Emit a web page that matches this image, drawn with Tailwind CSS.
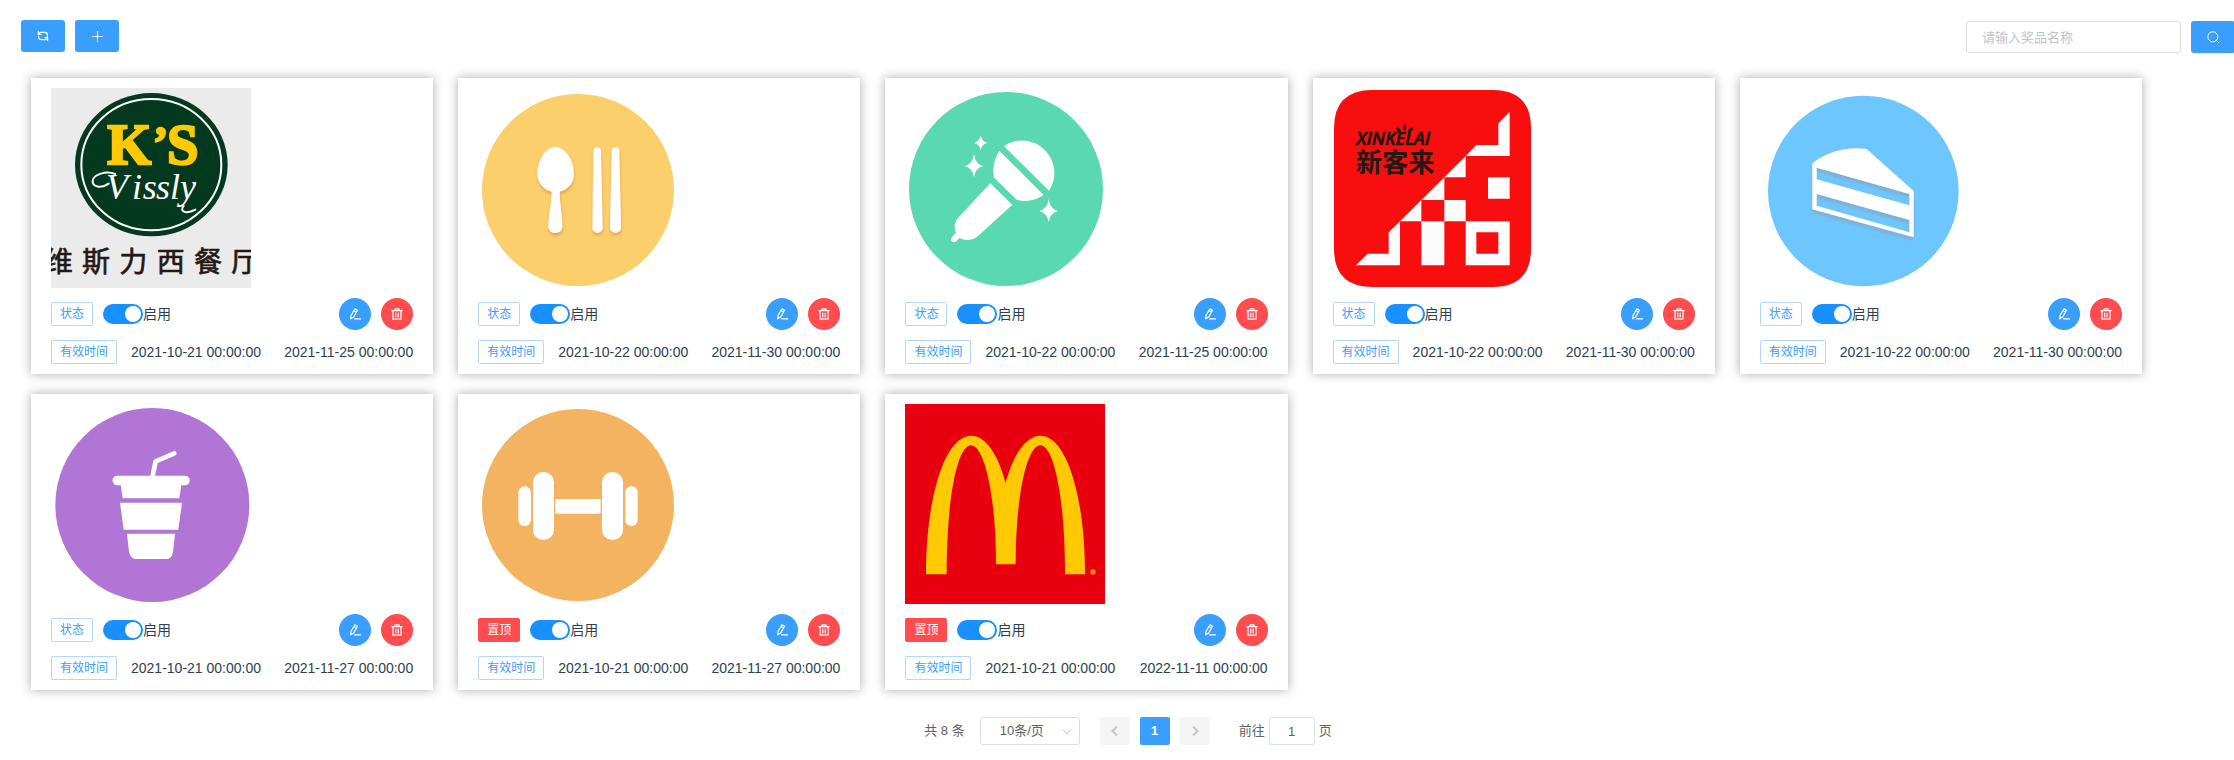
<!DOCTYPE html>
<html lang="zh-CN">
<head>
  <meta charset="UTF-8">
  <meta name="viewport" content="width=device-width, initial-scale=1.0">
  <title>奖品管理</title>
  <script src="https://cdn.jsdelivr.net/npm/@tailwindcss/browser@4"></script>
</head>
<body class="bg-white font-['Liberation_Sans','Noto_Sans_CJK_SC',sans-serif] text-sm text-[#2c3e50]">

  <!-- icons and prize pictures -->
  <svg class="absolute size-0" aria-hidden="true">
    <symbol id="i-refresh" viewBox="0 0 12 12">
      <g fill="none" stroke="currentColor" stroke-width="1.2" stroke-linecap="round" stroke-linejoin="round">
        <path d="M1.4 4.2 3.2 2.3h4.6a2.6 2.6 0 0 1 2.6 2.6v1.4M1.4 1.6v2.8h2.8"/>
        <path d="M10.6 7.8 8.8 9.7H4.2a2.6 2.6 0 0 1-2.6-2.6V6.2M10.6 10.4V7.6H7.8"/>
      </g>
    </symbol>
    <symbol id="i-plus" viewBox="0 0 12 12"><path d="M6.5 1v11M1 6.5h11" fill="none" stroke="currentColor"/></symbol>
    <symbol id="i-search" viewBox="0 0 12 12">
      <g fill="none" stroke="currentColor"><circle cx="5.8" cy="5.8" r="5"/><path d="m9.4 9.4 2.1 2.1" stroke-linecap="round"/></g>
    </symbol>
    <symbol id="i-edit" viewBox="0 0 12 12">
      <g fill="none" stroke="currentColor" stroke-width="1.2" stroke-linejoin="round"><path d="M5.9.8 8.5 2.3 4.7 8.9 1.7 10.8 2 7.5zM4.9 2.6l2.6 1.5"/><path d="M5.5 10.8h6" stroke-linecap="round"/></g>
    </symbol>
    <symbol id="i-delete" viewBox="0 0 12 12">
      <path d="M.8 2.6h10.4M4 2.6V.8h4v1.8M2 2.6v8.6h8V2.6M4.8 5v4M7.2 5v4" fill="none" stroke="currentColor" stroke-width="1.2" stroke-linecap="round" stroke-linejoin="round"/>
    </symbol>

    <filter id="warm-shadow"><feDropShadow dx="1" dy="8" stdDeviation="5" flood-color="#e9974f" flood-opacity=".8"/></filter>
    <filter id="cool-shadow"><feDropShadow dx="0" dy="11" stdDeviation="4" flood-color="#7fafcb" flood-opacity=".9"/></filter>

    <symbol id="p-vissly" viewBox="153 264 600 600">
      <path fill="#ebebeb" d="M153 264h600v600H153z"/>
      <ellipse cx="454" cy="494" rx="229" ry="215" fill="#02391f"/>
      <ellipse cx="454" cy="494" rx="210" ry="197" fill="none" stroke="#fff" stroke-width="6"/>
      <g fill="#ffc905" stroke="#ffc905" stroke-width="7" font-family="Liberation Serif, serif" font-weight="700" font-size="170">
        <text x="322" y="492">K</text><text x="501" y="492">S</text><text x="460" y="472" font-size="130">’</text>
      </g>
      <text y="598" x="318 396 428 468 510 540" fill="#fff" font-family="Liberation Serif, serif" font-style="italic" font-size="108">Vissly</text>
      <path d="M326 551c-22 16-50 10-48-9 3-19 40-31 68-20M551 618c-14 14 5 27 35 11" fill="none" stroke="#fff" stroke-width="6" stroke-linecap="round"/>
      <text y="816" x="134 246 358 470 582 694" fill="#231815" stroke="#231815" stroke-width="2" font-family="Noto Sans CJK SC, sans-serif" font-size="84">维斯力西餐厅</text>
    </symbol>

    <symbol id="p-meal" viewBox="84 84 600 600">
      <circle cx="384" cy="390" r="288" fill="#fbcf6c"/>
      <g fill="#fff" filter="url(#warm-shadow)">
        <path d="M316 261c32 0 56 42 56 80 0 28-17 46-43 54 0 36 8 70 8 102 0 14-8 22-21 22s-21-8-21-22c0-32 10-66 10-102-26-8-43-26-43-54 0-38 24-80 54-80z"/>
        <path d="M430 273c0-15 23-15 23 0l5 230c0 20-31 20-31 0zM485 273c0-15 23-15 23 0l5 230c0 20-33 20-33 0z"/>
      </g>
    </symbol>

    <symbol id="p-mic" viewBox="105 84 600 600">
      <circle cx="408" cy="387" r="291" fill="#5ad8b0"/>
      <g fill="#fff">
        <path d="M402 258A97 97 0 0 1 537 392zM388 272 521 405Q482 431 440 419L372 353Q364 310 388 272zM361 370l66 64-102 93q-26 22-57 7l-9 10q-8 7-15-2-4-8 14-23-10-24 4-43z"/>
        <path d="M332 226q3 18 19 23-16 4-19 22-3-18-19-22 16-5 19-23zM312 283q4 29 27 36-23 5-27 33-4-28-28-33 24-7 28-36zM536 417q4 30 28 36-24 6-28 34-4-28-28-34 24-6 28-36z"/>
      </g>
    </symbol>

    <symbol id="p-xinkelai" viewBox="99 84 600 600">
      <path fill="#f80e0e" d="M217 90h361q115 0 115 115v361q0 115-115 115H217q-115 0-115-115V205q0-115 115-115z"/>
      <path fill="#fcfcfc" fill-rule="evenodd" d="M629 155v133H497l32-33h66v-65zM497 288v64h-64zM433 352v68h-69zM364 420v64h-64zM433 420h64v64h-64zM300 484v132H168l35-35h63v-64zM364 484h69v132h-69zM497 484h132v132H497zm32 33v64h66v-64zM564 352h65v64h-65z"/>
      <text x="169" y="256" fill="#231815" stroke="#231815" stroke-width="2" font-family="Open Sans, sans-serif" font-weight="600" font-style="italic" font-size="54">XINKELAI</text>
      <path d="m293 207 5 5M314 199v8M334 207l-5 5" stroke="#231815" stroke-width="9" stroke-linecap="round"/>
      <text x="167" y="337" fill="#231815" font-family="Noto Sans CJK SC, sans-serif" font-weight="700" font-size="79">新客来</text>
    </symbol>

    <symbol id="p-cake" viewBox="120 264 600 600">
      <circle cx="430" cy="573" r="286" fill="#6ec6ff"/>
      <path fill="#fff" fill-rule="evenodd" filter="url(#cool-shadow)" d="M277 490c45-36 105-51 163-43l141 126v139l-304-84zM290 503v35l278 78v-34zM290 582v35l278 80v-37z"/>
    </symbol>

    <symbol id="p-drink" viewBox="153 72 600 600">
      <circle cx="457" cy="375" r="291" fill="#b175d5"/>
      <path fill="#fff" d="M352 287h203a14 14 0 0 1 0 29h-11l-6 39H368l-6-39h-10a14 14 0 0 1 0-29zM360 368h186l-11 81H371zM381 461h144l-6 54q-3 22-20 22h-92q-16-2-20-22z"/>
      <path d="m457 292 10-48 56-24" fill="none" stroke="#fff" stroke-width="14" stroke-linecap="round" stroke-linejoin="round"/>
    </symbol>

    <symbol id="p-gym" viewBox="84 72 600 600">
      <circle cx="384" cy="375" r="288" fill="#f3b361"/>
      <g fill="#fff">
        <rect x="205" y="319" width="38" height="119" rx="19"/><rect x="249" y="276" width="63" height="204" rx="31"/>
        <rect x="316" y="357" width="136" height="44" rx="4"/>
        <rect x="456" y="276" width="63" height="204" rx="31"/><rect x="526" y="319" width="37" height="119" rx="18"/>
      </g>
    </symbol>

    <symbol id="p-arches" viewBox="105 72 600 600">
      <path fill="#e8000f" d="M105 72h600v600H105z"/>
      <path fill="#ffc905" d="M168 583c0-233 57-416 136-416 41 0 79 52 103 142 24-90 63-142 104-142 79 0 134 183 134 416h-60c0-240-35-387-74-387s-74 147-74 357h-59c0-210-36-357-75-357s-73 147-73 387z"/>
      <circle cx="669" cy="576" r="8" fill="#f18a1d"/>
    </symbol>
  </svg>

  <header class="flex items-start justify-between overflow-hidden pt-5 pl-[21px]">
    <div class="flex gap-2.5">
      <button type="button" aria-label="刷新" class="flex h-8 w-11 items-center justify-center rounded-[3px] bg-[#3a9eff] text-white hover:bg-[#66b1ff]"><svg class="size-3"><use href="#i-refresh"/></svg></button>
      <button type="button" aria-label="新增" class="flex h-8 w-11 items-center justify-center rounded-[3px] bg-[#3a9eff] text-white hover:bg-[#66b1ff]"><svg class="size-3"><use href="#i-plus"/></svg></button>
    </div>
    <form class="-mr-px flex gap-2.5 pt-px">
      <input type="text" aria-label="奖品名称" placeholder="请输入奖品名称" class="h-8 w-[215px] rounded-[3px] border border-[#dcdfe6] px-[15px] text-[13px] text-[#606266] outline-none placeholder:text-[#c0c4cc] focus:border-[#409eff]">
      <button type="button" aria-label="搜索" class="flex h-8 w-11 items-center justify-center rounded-[3px] bg-[#3a9eff] text-white hover:bg-[#66b1ff]"><svg class="size-3"><use href="#i-search"/></svg></button>
    </form>
  </header>

  <main id="prizeList" class="mt-[25px] mr-[92px] ml-[31px] grid grid-cols-5 gap-x-[25px] gap-y-5"></main>

  <nav aria-label="分页" class="mt-[27px] flex items-center justify-center pb-4 pl-[22px] text-[13px] text-[#606266]">
    <span class="mr-[15px]">共 8 条</span>
    <div class="relative mr-5">
      <select aria-label="每页条数" class="h-7 w-[100px] appearance-none rounded-[3px] border border-[#dcdfe6] bg-white pr-4 text-center outline-none">
        <option>10条/页</option>
        <option>20条/页</option>
        <option>50条/页</option>
      </select>
      <svg class="pointer-events-none absolute top-2.5 right-2 size-2.5" viewBox="0 0 10 10" fill="none" stroke="#c0c4cc"><path d="m1 2.5 4 4.5 4-4.5"/></svg>
    </div>
    <div class="mr-[29px] flex gap-2.5">
      <button type="button" disabled aria-label="上一页" class="flex h-7 w-[30px] items-center justify-center rounded-xs bg-[#f5f5f6] text-[#c0c4cc]"><svg class="size-3" viewBox="0 0 12 12" fill="none" stroke="currentColor" stroke-width="2"><path d="M8 1.5 3.5 6 8 10.5"/></svg></button>
      <button type="button" aria-current="page" class="h-7 w-[30px] rounded-xs bg-[#3a9eff] font-bold text-white">1</button>
      <button type="button" disabled aria-label="下一页" class="flex h-7 w-[30px] items-center justify-center rounded-xs bg-[#f5f5f6] text-[#c0c4cc]"><svg class="size-3" viewBox="0 0 12 12" fill="none" stroke="currentColor" stroke-width="2"><path d="M4 1.5 8.5 6 4 10.5"/></svg></button>
    </div>
    <label class="flex items-center gap-1">前往 <input type="text" value="1" class="h-7 w-[46px] rounded-[3px] border border-[#dcdfe6] text-center outline-none"> 页</label>
  </nav>

  <script>
    const prizes = [
      { image: 'vissly', top: false, start: '2021-10-21 00:00:00', end: '2021-11-25 00:00:00' },
      { image: 'meal', top: false, start: '2021-10-22 00:00:00', end: '2021-11-30 00:00:00' },
      { image: 'mic', top: false, start: '2021-10-22 00:00:00', end: '2021-11-25 00:00:00' },
      { image: 'xinkelai', top: false, start: '2021-10-22 00:00:00', end: '2021-11-30 00:00:00' },
      { image: 'cake', top: false, start: '2021-10-22 00:00:00', end: '2021-11-30 00:00:00' },
      { image: 'drink', top: false, start: '2021-10-21 00:00:00', end: '2021-11-27 00:00:00' },
      { image: 'gym', top: true, start: '2021-10-21 00:00:00', end: '2021-11-27 00:00:00' },
      { image: 'arches', top: true, start: '2021-10-21 00:00:00', end: '2022-11-11 00:00:00' }
    ];

    const statusTag = '<span class="flex h-6 items-center rounded-xs border border-[#b3d8ff] px-2 text-xs text-[#3a9eff]">状态</span>';
    const topTag = '<span class="flex h-6 items-center rounded-xs border border-[#ff4d4f] bg-[#ff4d4f] px-2 text-xs text-white">置顶</span>';

    document.getElementById('prizeList').innerHTML = prizes.map((p, i) => `
      <article class="flex flex-col gap-2.5 bg-white px-5 py-2.5 shadow-[0_0_10px_#aaa]">
        <svg class="size-[200px]"><use href="#p-${p.image}"/></svg>
        <div class="flex items-center">
          ${p.top ? topTag : statusTag}
          <input type="checkbox" role="switch" id="enable${i}" checked class="ml-2.5 h-5 w-10 appearance-none rounded-full bg-[#dcdfe6] p-0.5 before:block before:size-4 before:rounded-full before:bg-white checked:bg-[#1890ff] checked:before:translate-x-5">
          <label for="enable${i}">启用</label>
          <button type="button" aria-label="编辑" class="ml-auto flex size-8 items-center justify-center rounded-full bg-[#3a9eff] text-white"><svg class="size-3"><use href="#i-edit"/></svg></button>
          <button type="button" aria-label="删除" class="ml-2.5 flex size-8 items-center justify-center rounded-full bg-[#ff4d4f] text-white"><svg class="size-3"><use href="#i-delete"/></svg></button>
        </div>
        <div class="flex items-center">
          <span class="flex h-6 items-center rounded-xs border border-[#b3d8ff] px-2 text-xs text-[#3a9eff]">有效时间</span>
          <time class="ml-3.5">${p.start}</time>
          <time class="ml-auto">${p.end}</time>
        </div>
      </article>`).join('');
  </script>
</body>
</html>
